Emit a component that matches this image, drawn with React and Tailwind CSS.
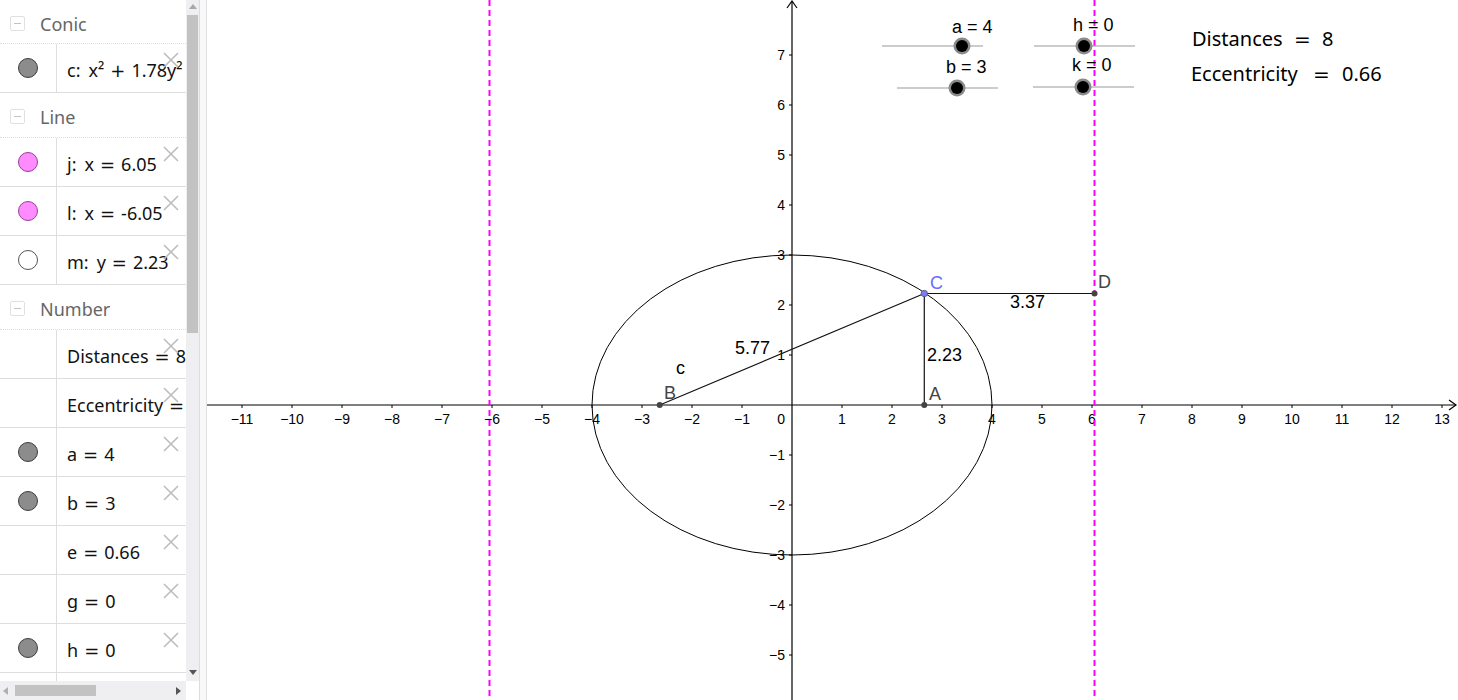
import React from 'react';

const mathFont = { fontFamily: '"Noto Sans", "DejaVu Sans", sans-serif' };
const opFont = { fontFamily: '"DejaVu Sans", sans-serif' };
const axisFont = '"Liberation Sans", Arial, sans-serif';

const groups = [
  { title: 'Conic', first: true, items: [{ dot: 'gray', text: 'c: x² + 1.78y² = 16' }] },
  {
    title: 'Line',
    items: [
      { dot: 'pink', text: 'j: x = 6.05' },
      { dot: 'pink', text: 'l: x = -6.05' },
      { dot: 'white', text: 'm: y = 2.23' },
    ],
  },
  {
    title: 'Number',
    items: [
      { dot: null, text: 'Distances = 8' },
      { dot: null, text: 'Eccentricity = 0.66' },
      { dot: 'gray', text: 'a = 4' },
      { dot: 'gray', text: 'b = 3' },
      { dot: null, text: 'e = 0.66' },
      { dot: null, text: 'g = 0' },
      { dot: 'gray', text: 'h = 0' },
      { dot: 'gray', text: 'k = 0' },
    ],
  },
];

const dotClass = {
  gray: 'bg-[#8c8c8c] border-[#3c3c3c]',
  pink: 'bg-[#ff8cff] border-[#9a3c9a]',
  white: 'bg-white border-[#555]',
};

// render "j: x = 6.05" with wide math operators
const MathText = ({ text }) => {
  const tokens = text.split(' ');
  return tokens.map((t, i) => {
    if (t === '=' || t === '+') {
      return (
        <span key={i} className="mx-[6px]" style={opFont}>
          {t}
        </span>
      );
    }
    const prev = tokens[i - 1];
    const gap = i > 0 && prev !== '=' && prev !== '+' ? 'ml-[8px]' : '';
    return (
      <span key={i} className={gap}>
        {t}
      </span>
    );
  });
};

const DeleteIcon = () => (
  <svg className="absolute right-[7px] top-[8px]" width="16" height="16" viewBox="0 0 16 16">
    <path d="M1 1 L15 15 M15 1 L1 15" stroke="#bdbdbd" strokeWidth="1.6" />
  </svg>
);

const GroupHeader = ({ title, first }) => (
  <div
    className={`flex items-center border-b border-dotted border-[#dedede] ${first ? 'h-[44px]' : 'h-[45px]'}`}
  >
    <div className="ml-[10px] mt-[3px] flex h-[15px] w-[15px] items-center justify-center rounded-[2px] border border-[#e0e0e0]">
      <div className="h-px w-[7px] bg-[#c4c4c4]" />
    </div>
    <span className="ml-[15px] pt-[5px] text-[18px] text-[#666]" style={mathFont}>
      {title}
    </span>
  </div>
);

const ItemRow = ({ dot, text }) => (
  <div className="relative flex h-[49px] shrink-0 border-b border-[#dedede]">
    <div className="flex w-[57px] shrink-0 items-center justify-center border-r border-[#dedede]">
      {dot && <div className={`h-[20px] w-[20px] rounded-full border ${dotClass[dot]}`} />}
    </div>
    <div
      className="flex flex-1 items-center overflow-hidden whitespace-nowrap pl-[10px] pt-[4px] text-[18px] text-[#111]"
      style={mathFont}
    >
      <MathText text={text} />
    </div>
    <DeleteIcon />
  </div>
);

const AlgebraPanel = () => (
  <div className="flex h-[700px] w-[200px] shrink-0 flex-col border-r border-[#dcdcdc] bg-white">
    <div className="flex min-h-0 flex-1">
      <div className="w-[186px] shrink-0 overflow-hidden">
        {groups.map(g => (
          <div key={g.title}>
            <GroupHeader title={g.title} first={g.first} />
            {g.items.map(it => (
              <ItemRow key={it.text} {...it} />
            ))}
          </div>
        ))}
      </div>
      <div className="relative w-[13px] bg-[#efeef1]">
        <div className="absolute left-[3px] top-[4px] h-0 w-0 border-x-[4px] border-b-[5px] border-x-transparent border-b-[#a8a8a8]" />
        <div className="absolute left-px top-[15px] h-[318px] w-[11px] bg-[#c2c2c2]" />
        <div className="absolute bottom-[6px] left-[3px] h-0 w-0 border-x-[4px] border-t-[5px] border-x-transparent border-t-[#555]" />
      </div>
    </div>
    <div className="flex h-[19px] shrink-0">
      <div className="relative w-[186px] bg-[#efeef1]">
        <div className="absolute left-[3px] top-[6px] h-0 w-0 border-y-[4px] border-r-[5px] border-y-transparent border-r-[#b0b0b0]" />
        <div className="absolute left-[15px] top-[4px] h-[11px] w-[81px] bg-[#c2c2c2]" />
        <div className="absolute right-[5px] top-[6px] h-0 w-0 border-y-[4px] border-l-[5px] border-y-transparent border-l-[#555]" />
      </div>
      <div className="flex-1 bg-white" />
    </div>
  </div>
);

// graph coordinates: origin (792, 405), 50px per unit
const X0 = 792;
const Y0 = 405;
const U = 50;
const px = x => X0 + x * U;
const py = y => Y0 - y * U;
const minus = n => (n < 0 ? `\u2212${-n}` : `${n}`);

const Slider = ({ x1, x2, y, knob, label, lx, ly }) => (
  <g>
    <line x1={x1} y1={y} x2={x2} y2={y} stroke="#9a9a9a" strokeWidth="1.2" />
    <circle cx={knob} cy={y} r="8.5" fill="#8a8a8a" />
    <circle cx={knob} cy={y} r="6" fill="#000" />
    <text x={lx} y={ly} fontFamily={axisFont} fontSize="18" fill="#000">
      {label}
    </text>
  </g>
);

const Graphics = () => {
  const xs = [];
  for (let i = -11; i <= 13; i++) if (i !== 0) xs.push(i);
  const ys = [];
  for (let i = -5; i <= 7; i++) if (i !== 0) ys.push(i);
  const c = Math.sqrt(7);
  const yc = 2.23;
  const A = [px(c), Y0];
  const B = [px(-c), Y0];
  const C = [px(c), py(yc)];
  const D = [px(6.05), py(yc)];

  return (
    <div className="h-[700px] w-[1251px] shrink-0 bg-white">
      <svg width="1251" height="700" viewBox="207 0 1251 700">
        {/* axes */}
        <line x1="207" y1={Y0} x2="1456" y2={Y0} stroke="#000" strokeWidth="1.2" />
        <path d="M1449 400 L1456 405 L1449 410" fill="none" stroke="#000" strokeWidth="1.2" />
        <line x1={X0} y1="700" x2={X0} y2="1" stroke="#000" strokeWidth="1.2" />
        <path d="M787 8 L792 1 L797 8" fill="none" stroke="#000" strokeWidth="1.2" />

        {xs.map(i => (
          <g key={`x${i}`}>
            <line x1={px(i)} y1={Y0} x2={px(i)} y2={Y0 + 3} stroke="#000" />
            <text x={px(i)} y="424" textAnchor="middle" fontFamily={axisFont} fontSize="14" fill="#000">
              {minus(i)}
            </text>
          </g>
        ))}
        {ys.map(i => (
          <g key={`y${i}`}>
            <line x1={X0 - 3} y1={py(i)} x2={X0} y2={py(i)} stroke="#000" />
            <text x="785" y={py(i) + 5} textAnchor="end" fontFamily={axisFont} fontSize="14" fill="#000">
              {minus(i)}
            </text>
          </g>
        ))}
        <text x="785" y="424" textAnchor="end" fontFamily={axisFont} fontSize="14" fill="#000">
          0
        </text>

        {/* vertical dashed lines j and l */}
        <line x1={px(-6.05)} y1="0" x2={px(-6.05)} y2="700" stroke="#ff00ff" strokeWidth="2" strokeDasharray="6 4" />
        <line x1={px(6.05)} y1="0" x2={px(6.05)} y2="700" stroke="#ff00ff" strokeWidth="2" strokeDasharray="6 4" />

        {/* ellipse */}
        <ellipse cx={X0} cy={Y0} rx={4 * U} ry={3 * U} fill="none" stroke="#000" strokeWidth="1" />

        {/* segments */}
        <line x1={B[0]} y1={B[1]} x2={C[0]} y2={C[1]} stroke="#111" strokeWidth="1.2" />
        <line x1={A[0]} y1={A[1]} x2={C[0]} y2={C[1]} stroke="#111" strokeWidth="1.2" />
        <line x1={C[0]} y1={C[1]} x2={D[0]} y2={D[1]} stroke="#111" strokeWidth="1.2" />

        {/* points */}
        <circle cx={A[0]} cy={A[1]} r="3" fill="#444" />
        <circle cx={B[0]} cy={B[1]} r="3" fill="#444" />
        <circle cx={D[0]} cy={D[1]} r="3" fill="#444" />
        <circle cx={C[0]} cy={C[1]} r="3.2" fill="#7b7bff" stroke="#555" strokeWidth="0.8" />

        <g fontFamily={axisFont} fontSize="18">
          <text x="929" y="400" fill="#444">A</text>
          <text x="664" y="399" fill="#444">B</text>
          <text x="930" y="289" fill="#6a6aff">C</text>
          <text x="1098" y="288" fill="#444">D</text>
          <text x="735" y="354" fill="#000">5.77</text>
          <text x="927" y="361" fill="#000">2.23</text>
          <text x="1010" y="308" fill="#000">3.37</text>
          <text x="676" y="374" fill="#000">c</text>
        </g>

        {/* sliders */}
        <Slider x1={882} x2={983} y={46} knob={962} label="a = 4" lx={952} ly={33} />
        <Slider x1={897} x2={998} y={88} knob={957} label="b = 3" lx={946} ly={73} />
        <Slider x1={1034} x2={1135} y={46} knob={1084} label="h = 0" lx={1073} ly={31} />
        <Slider x1={1033} x2={1134} y={87} knob={1083} label="k = 0" lx={1072} ly={71} />

        {/* text values */}
        <g fontFamily='"Noto Sans", "DejaVu Sans", sans-serif' fontSize="20" fill="#000">
          <text x="1192" y="46">
            Distances
            <tspan x="1294" fontFamily='"DejaVu Sans", sans-serif'>=</tspan>
            <tspan x="1322">8</tspan>
          </text>
          <text x="1191" y="81">
            Eccentricity
            <tspan x="1313" fontFamily='"DejaVu Sans", sans-serif'>=</tspan>
            <tspan x="1342">0.66</tspan>
          </text>
        </g>
      </svg>
    </div>
  );
};

const App = () => (
  <div className="flex h-[700px] w-[1458px] overflow-hidden bg-white">
    <AlgebraPanel />
    <div className="w-[7px] shrink-0 border-r border-[#e2e2e2] bg-[#f8f8f8]" />
    <Graphics />
  </div>
);

export default App;
